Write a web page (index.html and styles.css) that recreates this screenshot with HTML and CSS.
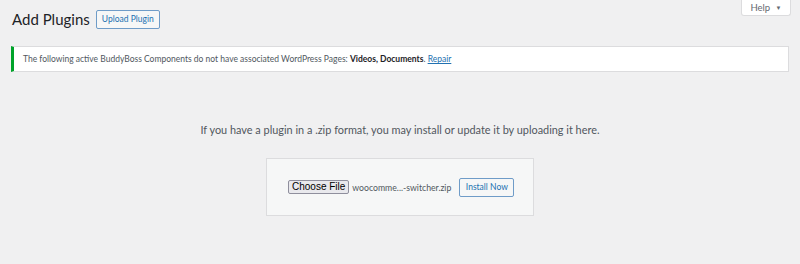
FILE: index.html
```html
<!DOCTYPE html>
<html lang="en">
<head>
<meta charset="UTF-8" />
<title>Add Plugins</title>
<link rel="stylesheet" href="styles.css">
</head>
<body>
  <div class="help-bar">
    <button class="help-tab">Help <span class="arrow">&#9660;</span></button>
  </div>
  <div class="wrap">
    <div class="page-head">
      <h1>Add Plugins</h1>
      <a class="page-action" href="#">Upload Plugin</a>
    </div>

    <div class="notice">
      <p>The following active BuddyBoss Components do not have associated WordPress Pages: <strong>Videos, Documents</strong>. <a href="#">Repair</a></p>
    </div>

    <div class="upload-plugin">
      <p class="install-help">If you have a plugin in a .zip format, you may install or update it by uploading it here.</p>
      <form class="upload-form">
        <span class="file-btn">Choose File</span>
        <span class="file-name">woocomme...-switcher.zip</span>
        <button type="button" class="install-btn">Install Now</button>
      </form>
    </div>
  </div>
</body>
</html>
```

FILE: styles.css
```css
body {
  margin: 0;
  background: #f0f0f1;
  font-family: Lato, "Open Sans", sans-serif;
  color: #3c434a;
  height: 264px;
  overflow: hidden;
}
.help-bar {
  display: flex;
  justify-content: flex-end;
  padding-right: 9px;
  height: 0;
}
.help-tab {
  width: 50px;
  height: 16px;
  padding: 0;
  background: #fff;
  border: 1px solid #dcdcde;
  border-top: none;
  border-radius: 0 0 3px 3px;
  font-family: Lato, sans-serif;
  font-size: 9.5px;
  color: #646970;
}
.help-tab .arrow {
  font-size: 6px;
  margin-left: 3px;
  position: relative;
  top: -1px;
}
.wrap {
  padding: 0 11px 0 11px;
}
.page-head {
  display: flex;
  align-items: center;
  gap: 6px;
  padding-top: 9px;
  height: 20px;
}
h1 {
  margin: 0;
  font-size: 15px;
  font-weight: 400;
  color: #1d2327;
  padding-left: 1px;
}
.page-action {
  display: inline-block;
  padding: 3px 5px;
  border: 1px solid #6f9cc8;
  border-radius: 2px;
  background: #f6f7f7;
  color: #2271b1;
  font-size: 8.5px;
  text-decoration: none;
  line-height: 11px;
}
.notice {
  margin-top: 17px;
  background: #fff;
  border: 1px solid #dcdcde;
  border-left: 3px solid #00a32a;
  height: 24px;
  display: flex;
  align-items: center;
  padding-left: 9px;
}
.notice p {
  margin: 0;
  font-size: 8.5px;
  color: #50575e;
}
.notice strong {
  color: #1d2327;
}
.notice a {
  color: #2271b1;
}
.upload-plugin {
  display: flex;
  flex-direction: column;
  align-items: center;
}
.install-help {
  margin: 51px 0 0;
  font-size: 10.9px;
  color: #50575e;
}
.upload-form {
  margin-top: 22px;
  background: #f6f7f7;
  border: 1px solid #dcdcde;
  display: flex;
  align-items: center;
  padding-left: 21px;
  box-sizing: border-box;
  width: 268px;
  height: 58px;
  white-space: nowrap;
}
.file-btn {
  flex-shrink: 0;
  font-family: "Liberation Sans", Arial, sans-serif;
  font-size: 10px;
  color: #000;
  background: #e9e9ed;
  border: 1px solid #8f8f9d;
  border-radius: 2px;
  padding: 0 3px;
  line-height: 12px;
}
.file-name {
  flex-shrink: 0;
  font-size: 8.7px;
  color: #50575e;
  margin-left: 3px;
}
.install-btn {
  flex-shrink: 0;
  margin-left: 8px;
  height: 19px;
  width: 55px;
  padding: 0;
  border: 1px solid #6f9cc8;
  border-radius: 2px;
  background: #f6f7f7;
  color: #2271b1;
  font-family: Lato, sans-serif;
  font-size: 8.5px;
  white-space: nowrap;
}
```
